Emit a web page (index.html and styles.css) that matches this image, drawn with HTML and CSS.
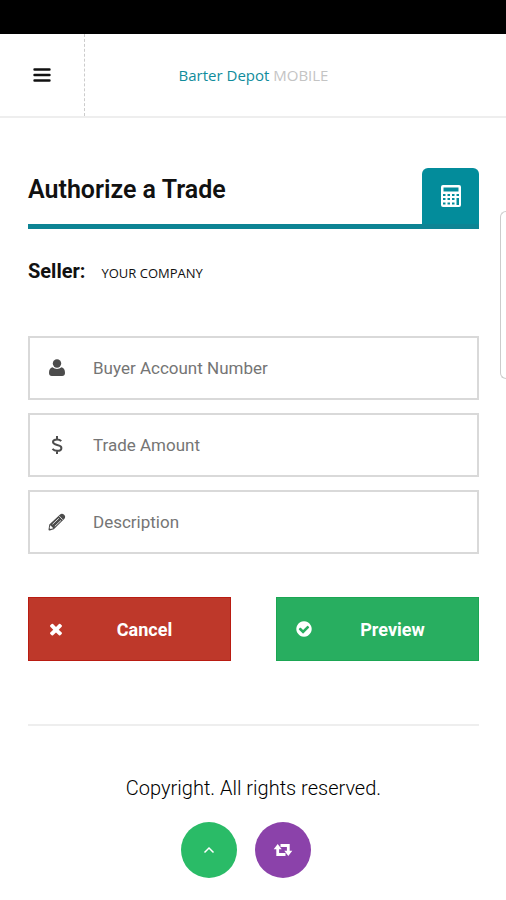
FILE: index.html
```html
<!DOCTYPE html>
<html lang="en">
<head>
<meta charset="utf-8">
<meta name="viewport" content="width=device-width, initial-scale=1">
<title>Authorize a Trade</title>
<link rel="stylesheet" href="styles.css">
</head>
<body>
<div class="status-bar"></div>
<header class="header">
  <button class="menu" type="button" aria-label="Menu">
    <svg width="18" height="16" viewBox="0 0 18 16"><path d="M1.5 2.5h15M1.5 8h15M1.5 13.5h15" fill="none" stroke="#111" stroke-width="2.4" stroke-linecap="round"/></svg>
  </button>
  <a class="logo" href="#">Barter Depot <span class="logo-light">MOBILE</span></a>
</header>
<div class="side-tab"></div>
<main class="page">
  <div class="title-row">
    <h1 class="title">Authorize a Trade</h1>
    <button class="calc" type="button" aria-label="Calculator">
      <svg width="20" height="22" viewBox="0 0 20 22"><path fill="#fff" fill-rule="evenodd" d="M2 0h16a2 2 0 0 1 2 2v18a2 2 0 0 1-2 2H2a2 2 0 0 1-2-2V2a2 2 0 0 1 2-2zM2.500 2.500v4h15v-4zM2 9v2h2.500V9zM6.500 9v2H9V9zM11 9v2h2.500V9zM15.500 9v2H18V9zM2 13v2h2.500v-2zM6.500 13v2H9v-2zM11 13v2h2.500v-2zM15.500 13v7H18v-7zM2 17.500v2h2.500v-2zM6.500 17.500v2H9v-2zM11 17.500v2h2.500v-2z"/></svg>
    </button>
  </div>
  <p class="seller"><strong class="seller-label">Seller:</strong><span class="seller-name">YOUR COMPANY</span></p>
  <form class="form">
    <label class="field">
      <svg class="icon" viewBox="0 0 20 20"><circle cx="10" cy="5.500" r="4.200"/><path d="M5.500 9.300Q7.500 11 10 11t4.500-1.700c2.500.4 3.500 2.700 3.500 5.700 0 1.800-1.100 3-2.800 3H4.800C3.100 18 2 16.800 2 15c0-3 1-5.300 3.500-5.700z"/></svg>
      <input class="input" type="text" placeholder="Buyer Account Number" aria-label="Buyer Account Number">
    </label>
    <label class="field">
      <svg class="icon" viewBox="0 0 20 20"><path d="M14.200 6.200C13.200 4.900 11.800 4.400 10 4.400c-2.400 0-4 1-4 2.700 0 4 8.400 1.700 8.400 5.800 0 1.800-1.700 2.900-4.200 2.900-2 0-3.600-.7-4.700-2M10 1v3.400M10 15.800v3.200" fill="none" stroke="#4c4c4c" stroke-width="2"/></svg>
      <input class="input" type="text" placeholder="Trade Amount" aria-label="Trade Amount">
    </label>
    <label class="field">
      <svg class="icon" viewBox="0 0 20 20"><path d="M1.500 17.500l.8-5L12.800 2.700q2.200-1.900 4.300.1t.1 4.300L6.800 17.200l-4 1.300q-1.300.2-1.300-1z"/><path d="M5.500 12.300l6.300-6M7.800 14.300l6.300-6M12.300 4.200l3.400 3.500" fill="none" stroke="#fff" stroke-width="0.800"/><path d="M3.300 13.300l3 2.900-2.800.9-.9-.9z" fill="#fff"/></svg>
      <input class="input" type="text" placeholder="Description" aria-label="Description">
    </label>
    <div class="actions">
      <button class="btn btn-cancel" type="button">
        <svg class="btn-icon" viewBox="0 0 1792 1792"><path d="M1490 1322q0 40-28 68l-136 136q-28 28-68 28t-68-28l-294-294-294 294q-28 28-68 28t-68-28l-136-136q-28-28-28-68t28-68l294-294-294-294q-28-28-28-68t28-68l136-136q28-28 68-28t68 28l294 294 294-294q28-28 68-28t68 28l136 136q28 28 28 68t-28 68l-294 294 294 294q28 28 28 68z"/></svg>
        <span class="btn-text">Cancel</span>
      </button>
      <button class="btn btn-preview" type="button">
        <svg class="btn-icon" viewBox="0 0 1792 1792"><path d="M1412 734q0-28-18-46l-91-90q-19-19-45-19t-45 19l-408 407-226-226q-19-19-45-19t-45 19l-91 90q-18 18-18 46 0 27 18 45l362 362q19 19 45 19 27 0 46-19l543-543q18-18 18-45zm252 162q0 209-103 385.500t-279.500 279.500-385.500 103-385.500-103-279.500-279.500-103-385.500 103-385.500 279.500-279.500 385.500-103 385.500 103 279.500 279.500 103 385.500z"/></svg>
        <span class="btn-text">Preview</span>
      </button>
    </div>
  </form>
  <footer class="footer">
    <p class="copyright">Copyright. All rights reserved.</p>
    <div class="rounds">
      <a class="round round-up" href="#" aria-label="Back to top">
        <svg width="12" height="8" viewBox="0 0 12 8"><path d="M1.500 6.500L6 2l4.500 4.500" fill="none" stroke="#fff" stroke-width="1.500"/></svg>
      </a>
      <a class="round round-swap" href="#" aria-label="Refresh">
        <svg width="18" height="12" viewBox="0 0 18 12"><path d="M3.700 4v6.500h7.800M14.300 8V1.500H6.500" fill="none" stroke="#fff" stroke-width="2.800"/><path fill="#fff" d="M3.700 0l4 5.200h-8zM14.300 12l-4-5.200h8z"/></svg>
      </a>
    </div>
  </footer>
</main>
</body>
</html>
```
FILE: styles.css
```css
* { box-sizing: border-box; }
body {
  margin: 0;
  position: relative;
  background: #fff;
  color: #111;
  font-family: Roboto, "Liberation Sans", sans-serif;
  overflow-x: hidden;
}
button { border: 0; padding: 0; font: inherit; cursor: pointer; }
h1, p { margin: 0; }
a { text-decoration: none; }
svg { display: block; overflow: visible; }

.status-bar { height: 34px; background: #000; }
.header {
  display: flex;
  height: 84px;
  padding-right: 84px;
  border-bottom: 2px solid #eee;
}
.menu {
  display: flex;
  align-items: center;
  justify-content: center;
  width: 85px;
  background: none;
  border-right: 1px dashed #ccc;
}
.logo {
  flex: 1;
  align-self: center;
  text-align: center;
  font-family: "Open Sans", "Noto Sans", sans-serif;
  font-size: 15px;
  line-height: 20px;
  color: #108c9c;
}
.logo-light { color: #c4c4c4; }

.side-tab {
  position: absolute;
  top: 211px;
  right: 0;
  width: 6px;
  height: 168px;
  border: 1px solid #ccc;
  border-right: 0;
  border-radius: 6px 0 0 6px;
}

.page { padding: 50px 27px 22px 28px; }
.title-row {
  display: flex;
  justify-content: space-between;
  border-bottom: 5px solid #0d8494;
}
.title { padding-top: 6px; font-size: 25px; line-height: 32px; font-weight: 600; }
.calc {
  display: flex;
  align-items: center;
  justify-content: center;
  width: 57px;
  height: 56px;
  background: #038c9b;
  border-radius: 6px 6px 0 0;
}
.seller { display: flex; align-items: baseline; gap: 16px; margin-top: 30px; line-height: 24px; }
.seller-label { font-size: 20px; }
.seller-name { font-family: "Open Sans", "Noto Sans", sans-serif; font-size: 13px; }

.form { display: flex; flex-direction: column; gap: 13px; margin-top: 51px; }
.field {
  display: flex;
  align-items: center;
  height: 64px;
  padding: 0 17px;
  border: 2px solid #d9d9d9;
}
.icon { width: 20px; height: 20px; margin-right: 26px; fill: #4c4c4c; }
.input {
  flex: 1;
  min-width: 0;
  padding: 0;
  border: 0;
  outline: 0;
  background: none;
  font: 17px/24px Roboto, sans-serif;
  color: #333;
}
.input::placeholder { color: #757575; opacity: 1; }

.actions { display: grid; grid-template-columns: 1fr 1fr; gap: 45px; margin-top: 30px; }
.btn {
  display: flex;
  align-items: center;
  height: 64px;
  padding: 0 18px;
  color: #fff;
  font-size: 18px;
  font-weight: 700;
}
.btn-icon { width: 18px; height: 18px; fill: #fff; }
.btn-text { flex: 1; padding-left: 12px; text-align: center; }
.btn-cancel { background: #be382a; border: 1px solid #b91c12; }
.btn-preview { background: #28ae60; border: 1px solid #1ba653; }

.footer { margin-top: 63px; padding-top: 50px; border-top: 2px solid #eee; text-align: center; }
.copyright { font-size: 20px; line-height: 24px; font-weight: 300; color: #000; }
.rounds { display: flex; justify-content: center; gap: 18px; margin-top: 22px; padding-right: 16px; }
.round {
  display: flex;
  align-items: center;
  justify-content: center;
  width: 56px;
  height: 56px;
  border-radius: 50%;
}
.round-up { background: #2abb67; }
.round-swap { background: #8b42aa; }
```
